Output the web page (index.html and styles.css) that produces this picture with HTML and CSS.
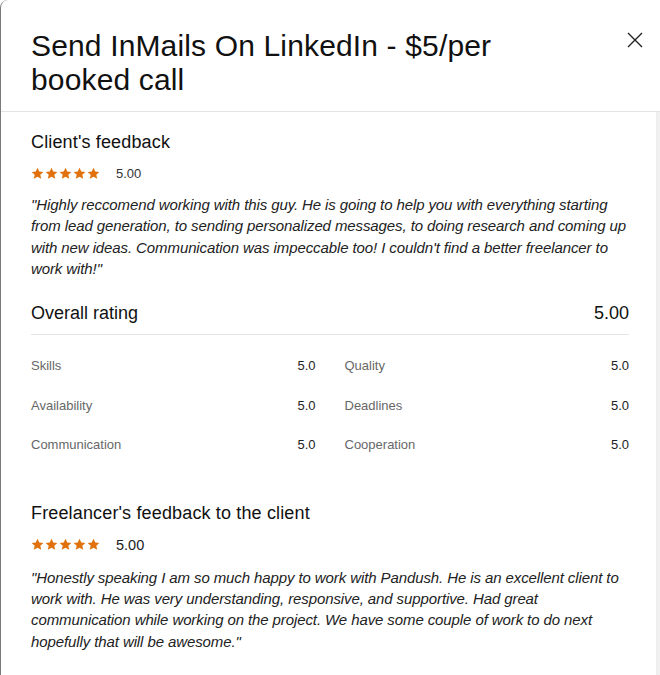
FILE: index.html
```html
<!DOCTYPE html>
<html>
<head>
<meta charset="utf-8">
<link rel="stylesheet" href="styles.css">
</head>
<body>
<div class="modal">
  <header class="modal-header">
    <h1 class="title">Send InMails On LinkedIn - $5/per booked call</h1>
    <button class="close" aria-label="Close">
      <svg width="16" height="16" viewBox="0 0 16 16"><path d="M1 1 L15 15 M15 1 L1 15" stroke="#222" stroke-width="1.4" fill="none"/></svg>
    </button>
  </header>
  <div class="modal-body">
    <div class="content">
      <section class="feedback">
        <h2 class="section-title">Client's feedback</h2>
        <div class="rating">
          <span class="stars">
            <svg viewBox="0 0 14 14"><path d="M7 .8l1.9 4.1 4.4.4-3.3 3 1 4.4L7 10.4l-4 2.3 1-4.4-3.3-3 4.4-.4z"/></svg>
            <svg viewBox="0 0 14 14"><path d="M7 .8l1.9 4.1 4.4.4-3.3 3 1 4.4L7 10.4l-4 2.3 1-4.4-3.3-3 4.4-.4z"/></svg>
            <svg viewBox="0 0 14 14"><path d="M7 .8l1.9 4.1 4.4.4-3.3 3 1 4.4L7 10.4l-4 2.3 1-4.4-3.3-3 4.4-.4z"/></svg>
            <svg viewBox="0 0 14 14"><path d="M7 .8l1.9 4.1 4.4.4-3.3 3 1 4.4L7 10.4l-4 2.3 1-4.4-3.3-3 4.4-.4z"/></svg>
            <svg viewBox="0 0 14 14"><path d="M7 .8l1.9 4.1 4.4.4-3.3 3 1 4.4L7 10.4l-4 2.3 1-4.4-3.3-3 4.4-.4z"/></svg>
          </span>
          <span class="score">5.00</span>
        </div>
        <p class="quote">"Highly reccomend working with this guy. He is going to help you with everything starting from lead generation, to sending personalized messages, to doing research and coming up with new ideas. Communication was impeccable too! I couldn't find a better freelancer to work with!"</p>
      </section>

      <section class="overall">
        <div class="overall-head">
          <span>Overall rating</span>
          <span>5.00</span>
        </div>
        <div class="criteria">
          <div class="crit"><span class="crit-label">Skills</span><span class="crit-val">5.0</span></div>
          <div class="crit"><span class="crit-label">Quality</span><span class="crit-val">5.0</span></div>
          <div class="crit"><span class="crit-label">Availability</span><span class="crit-val">5.0</span></div>
          <div class="crit"><span class="crit-label">Deadlines</span><span class="crit-val">5.0</span></div>
          <div class="crit"><span class="crit-label">Communication</span><span class="crit-val">5.0</span></div>
          <div class="crit"><span class="crit-label">Cooperation</span><span class="crit-val">5.0</span></div>
        </div>
      </section>

      <section class="feedback freelancer">
        <h2 class="section-title">Freelancer's feedback to the client</h2>
        <div class="rating">
          <span class="stars">
            <svg viewBox="0 0 14 14"><path d="M7 .8l1.9 4.1 4.4.4-3.3 3 1 4.4L7 10.4l-4 2.3 1-4.4-3.3-3 4.4-.4z"/></svg>
            <svg viewBox="0 0 14 14"><path d="M7 .8l1.9 4.1 4.4.4-3.3 3 1 4.4L7 10.4l-4 2.3 1-4.4-3.3-3 4.4-.4z"/></svg>
            <svg viewBox="0 0 14 14"><path d="M7 .8l1.9 4.1 4.4.4-3.3 3 1 4.4L7 10.4l-4 2.3 1-4.4-3.3-3 4.4-.4z"/></svg>
            <svg viewBox="0 0 14 14"><path d="M7 .8l1.9 4.1 4.4.4-3.3 3 1 4.4L7 10.4l-4 2.3 1-4.4-3.3-3 4.4-.4z"/></svg>
            <svg viewBox="0 0 14 14"><path d="M7 .8l1.9 4.1 4.4.4-3.3 3 1 4.4L7 10.4l-4 2.3 1-4.4-3.3-3 4.4-.4z"/></svg>
          </span>
          <span class="score big">5.00</span>
        </div>
        <p class="quote">"Honestly speaking I am so much happy to work with Pandush. He is an excellent client to work with. He was very understanding, responsive, and supportive. Had great communication while working on the project. We have some couple of work to do next hopefully that will be awesome."</p>
      </section>
    </div>
    <div class="scrollbar"></div>
  </div>
</div>
</body>
</html>
```

FILE: styles.css
```css
* { box-sizing: border-box; }
html, body { margin: 0; padding: 0; background: #fff; }
body {
  font-family: "Liberation Sans", Arial, sans-serif;
  color: #181818;
  width: 660px;
  height: 675px;
  overflow: hidden;
}
.modal {
  height: 675px;
  border-left: 1px solid #7a7a7a;
  border-top-left-radius: 8px;
  display: flex;
  flex-direction: column;
  background: #fff;
}
.modal-header {
  display: flex;
  justify-content: space-between;
  align-items: flex-start;
  padding: 29px 17px 0 30px;
  height: 112px;
  border-bottom: 1px solid #e4e4e4;
}
.title {
  margin: 0;
  font-weight: 400;
  font-size: 30px;
  line-height: 34px;
  letter-spacing: 0.15px;
  width: 520px;
  color: #111;
}
.close {
  border: 0;
  background: none;
  padding: 0;
  margin-top: 3px;
  width: 16px;
  height: 16px;
  cursor: pointer;
}
.close svg { display: block; }
.modal-body {
  flex: 1;
  display: flex;
  min-height: 0;
}
.content {
  flex: 1;
  padding: 18px 27px 0 30px;
}
.scrollbar {
  width: 4px;
  border-left: 1px solid #ececec;
  background: #f0f0f0;
}
.section-title {
  margin: 0;
  font-size: 18px;
  font-weight: 400;
  line-height: 24px;
  letter-spacing: 0.15px;
  color: #111;
}
.rating {
  display: flex;
  align-items: center;
  margin-top: 10px;
  height: 18px;
}
.stars { display: flex; gap: 1px; }
.stars svg { width: 13px; height: 13px; fill: #e0710c; display: block; }
.score {
  margin-left: 16px;
  font-size: 13px;
  color: #333;
}
.score.big { font-size: 14.5px; color: #222; }
.quote {
  margin: 12px 0 0;
  font-style: italic;
  font-size: 15px;
  line-height: 21.3px;
  letter-spacing: -0.1px;
  color: #222;
}
.overall { margin-top: 22px; }
.overall-head {
  display: flex;
  justify-content: space-between;
  font-size: 18px;
  line-height: 24px;
  padding-bottom: 9px;
  border-bottom: 1px solid #e4e4e4;
  color: #111;
}
.criteria {
  display: grid;
  grid-template-columns: 1fr 1fr;
  column-gap: 29px;
  row-gap: 0;
  padding-top: 20px;
}
.crit {
  display: flex;
  justify-content: space-between;
  font-size: 13px;
  height: 39.5px;
  line-height: 22px;
}
.crit-label { color: #676767; }
.crit-val { color: #222; }
.freelancer { margin-top: 27px; }
.freelancer .rating { margin-top: 11px; }
.freelancer .quote { margin-top: 13px; }
```
